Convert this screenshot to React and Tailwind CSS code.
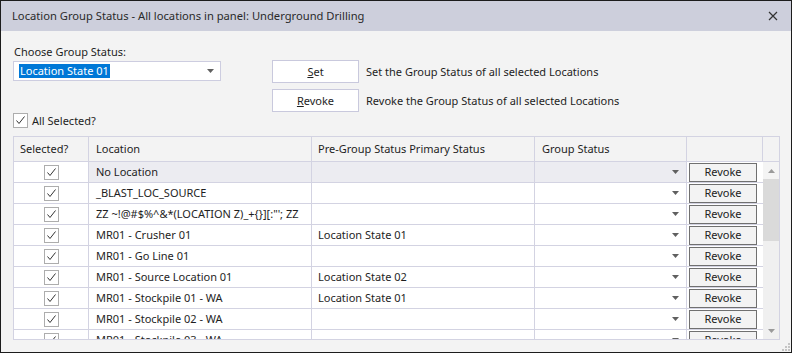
import React from 'react';

const ROWS = [
  { name: 'No Location', pre: '', active: true },
  { name: '_BLAST_LOC_SOURCE', pre: '' },
  { name: 'ZZ ~!@#$%^&*(LOCATION Z)_+{}][:"\'; ZZ', pre: '' },
  { name: 'MR01 - Crusher 01', pre: 'Location State 01' },
  { name: 'MR01 - Go Line 01', pre: '' },
  { name: 'MR01 - Source Location 01', pre: 'Location State 02' },
  { name: 'MR01 - Stockpile 01 - WA', pre: 'Location State 01' },
  { name: 'MR01 - Stockpile 02 - WA', pre: '' },
  { name: 'MR01 - Stockpile 03 - WA', pre: '' }
];

function Check({ className = '' }) {
  return (
    <div className={`w-[15px] h-[15px] shrink-0 border border-[#adadad] bg-white flex items-center justify-center ${className}`}>
      <svg width="11" height="11" viewBox="0 0 11 11">
        <path d="M1.5 5.5 L4 8.5 L9.5 1.5" fill="none" stroke="#333" strokeWidth="1" />
      </svg>
    </div>
  );
}

function Caret({ color = '#606060' }) {
  return (
    <svg width="7" height="4" viewBox="0 0 7 4">
      <path d="M0 0 H7 L3.5 4 Z" fill={color} />
    </svg>
  );
}

function GridRow({ row }) {
  const bg = row.active ? 'bg-[#ececf1]' : 'bg-white';
  return (
    <div className={`flex h-[21px] shrink-0 border-b border-[#d3d3e2] ${bg}`}>
      <div className="w-[75px] border-r border-[#d3d3e2] flex items-center justify-center bg-white">
        <Check />
      </div>
      <div className="w-[223px] border-r border-[#d3d3e2] pl-[7px] flex items-center whitespace-nowrap overflow-hidden">
        {row.name}
      </div>
      <div className="w-[223px] border-r border-[#d3d3e2] pl-[6px] flex items-center whitespace-nowrap">
        {row.pre}
      </div>
      <div className="w-[152px] border-r border-[#d3d3e2] flex items-center justify-end pr-[7px]">
        <Caret />
      </div>
      <div className="w-[76px] bg-white flex items-center pl-[2px]">
        <div className="w-[68px] h-[19px] border border-[#707070] bg-[#f3f3f3] flex items-center justify-center text-[#222]">
          Revoke
        </div>
      </div>
    </div>
  );
}

export default function App() {
  return (
    <div
      className="w-[792px] h-[353px] border border-[#1c1c1c] bg-[#f3f3f3] flex flex-col text-[11px] leading-[16px] text-[#1e1e1e] overflow-hidden"
      style={{ fontFamily: '"Noto Sans", "Open Sans", sans-serif' }}
    >
      {/* title bar */}
      <div className="h-[30px] bg-[#cdcfdc] flex items-center justify-between pl-[11px] pr-[13px] shrink-0">
        <span className="text-[11.2px] text-[#2a2a2a]">Location Group Status - All locations in panel: Underground Drilling</span>
        <svg width="10" height="10" viewBox="0 0 10 10">
          <path d="M1 1 L9 9 M9 1 L1 9" stroke="#333" strokeWidth="1.2" />
        </svg>
      </div>

      <div className="flex flex-col pl-[12px] shrink-0">
        {/* top controls */}
        <div className="flex pt-[13px]">
          <div className="w-[208px] flex flex-col">
            <div className="h-[16px] pl-[1px]">Choose Group Status:</div>
            <div className="mt-[1px] h-[20px] border border-[#cdcde0] bg-white flex items-center justify-between pl-[5px] pr-[6px]">
              <span className="bg-[#0078d7] text-white px-[1px] leading-[14px]">Location State 01</span>
              <Caret />
            </div>
          </div>
          <div className="ml-[51px] mt-[16px] flex flex-col gap-[6px]">
            <div className="flex items-center">
              <div className="w-[87px] h-[23px] border border-[#c9c9dd] bg-white flex items-center justify-center">
                <span><span className="underline">S</span>et</span>
              </div>
              <span className="ml-[7px]">Set the Group Status of all selected Locations</span>
            </div>
            <div className="flex items-center">
              <div className="w-[87px] h-[23px] border border-[#c9c9dd] bg-white flex items-center justify-center">
                <span><span className="underline">R</span>evoke</span>
              </div>
              <span className="ml-[7px]">Revoke the Group Status of all selected Locations</span>
            </div>
          </div>
        </div>

        {/* all selected */}
        <div className="flex items-center mt-[1px] h-[15px]">
          <Check />
          <span className="ml-[4px]">All Selected?</span>
        </div>

        {/* grid */}
        <div className="mt-[8px] w-[767px] h-[204px] border border-[#d3d3e2] flex flex-col">
          <div className="flex h-[25px] border-b border-[#d3d3e2] shrink-0">
            <div className="w-[75px] border-r border-[#d3d3e2] pl-[6px] flex items-center">Selected?</div>
            <div className="w-[223px] border-r border-[#d3d3e2] pl-[7px] flex items-center">Location</div>
            <div className="w-[223px] border-r border-[#d3d3e2] pl-[6px] flex items-center">Pre-Group Status Primary Status</div>
            <div className="w-[152px] border-r border-[#d3d3e2] pl-[7px] flex items-center">Group Status</div>
            <div className="w-[76px] border-r border-[#d3d3e2]"></div>
            <div className="w-[16px]"></div>
          </div>
          <div className="flex h-[177px] shrink-0">
            <div className="w-[749px] h-[177px] overflow-hidden flex flex-col">
              {ROWS.map((r) => (
                <GridRow key={r.name} row={r} />
              ))}
            </div>
            <div className="w-[16px] h-[177px] bg-[#f0f0f0] flex flex-col">
              <div className="h-[17px] flex items-center justify-center bg-[#f4f4f4]">
                <svg width="7" height="4" viewBox="0 0 7 4">
                  <path d="M0 4 H7 L3.5 0 Z" fill="#9a9a9a" />
                </svg>
              </div>
              <div className="h-[62px] bg-[#dadada]"></div>
              <div className="flex-1"></div>
              <div className="h-[17px] flex items-center justify-center">
                <Caret color="#9a9a9a" />
              </div>
            </div>
          </div>
        </div>
      </div>

      {/* resize grip */}
      <div className="flex-1 flex items-end justify-end pr-[1px] pb-[1px]">
        <svg width="8" height="8" viewBox="0 0 8 8">
          <rect x="6" y="0" width="2" height="2" fill="#c4c4c4" />
          <rect x="3" y="3" width="2" height="2" fill="#c4c4c4" />
          <rect x="6" y="3" width="2" height="2" fill="#c4c4c4" />
          <rect x="0" y="6" width="2" height="2" fill="#c4c4c4" />
          <rect x="3" y="6" width="2" height="2" fill="#c4c4c4" />
          <rect x="6" y="6" width="2" height="2" fill="#c4c4c4" />
        </svg>
      </div>
    </div>
  );
}
